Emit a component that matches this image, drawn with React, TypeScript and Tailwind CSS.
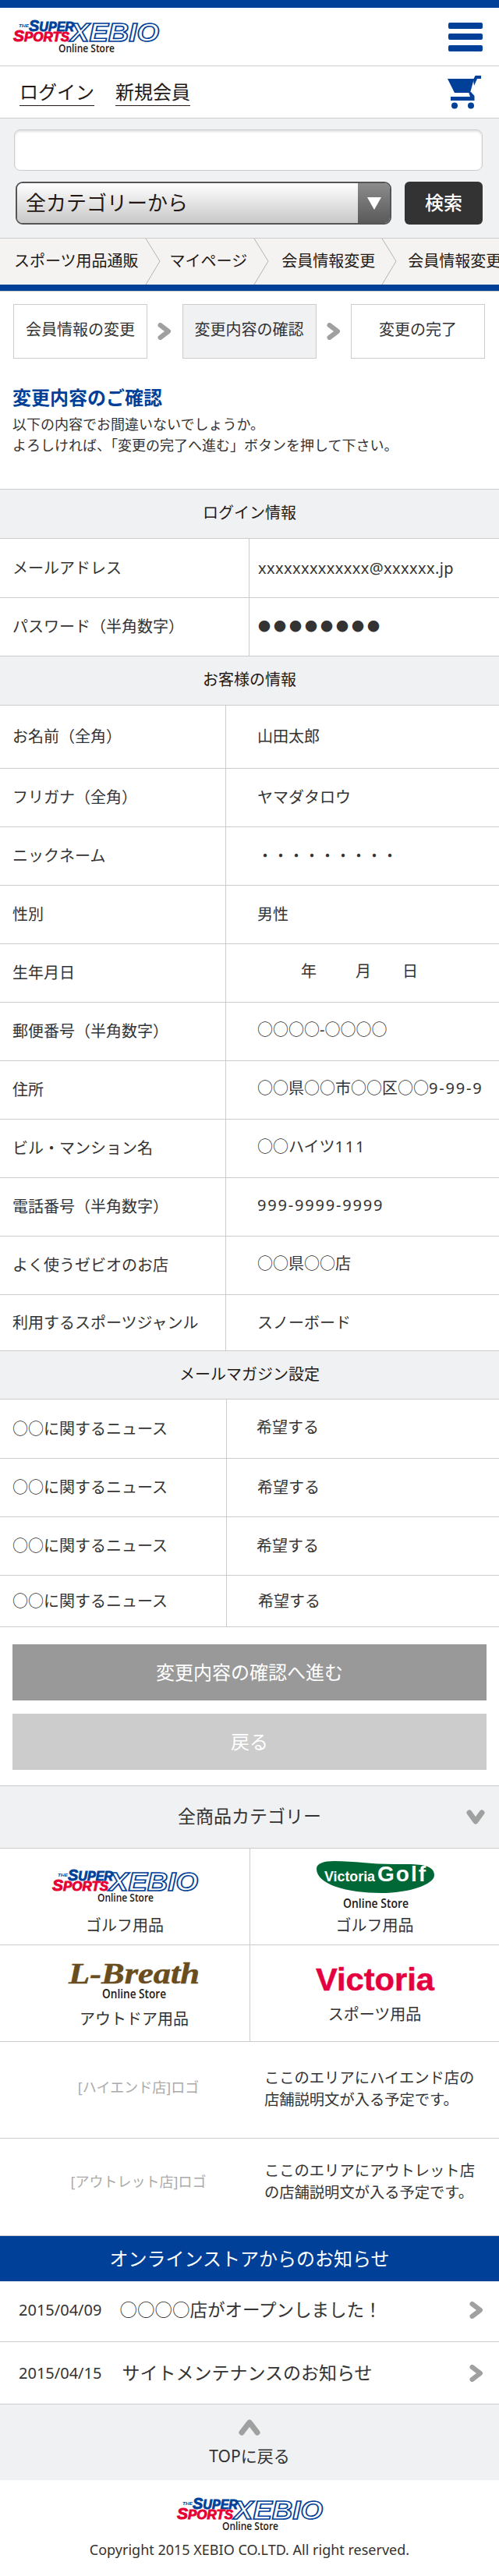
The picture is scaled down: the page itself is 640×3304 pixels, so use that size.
import React from "react";

const BLUE = "#004098";

function Logo() {
  return (
    <svg width="189" height="44" viewBox="0 0 189 44" role="img" aria-label="The Super Sports XEBIO Online Store" className="overflow-visible">
      <g fontFamily="'Liberation Sans', sans-serif" fontWeight="700" fontStyle="italic">
        <text x="8" y="10" fontSize="6" fill={BLUE} textLength="13" lengthAdjust="spacingAndGlyphs">THE</text>
        <text x="21" y="15" fill={BLUE} stroke={BLUE} strokeWidth="0.9" textLength="58" lengthAdjust="spacingAndGlyphs">
          <tspan fontSize="21">S</tspan>
          <tspan fontSize="17">UPER</tspan>
        </text>
        <text x="1" y="28" fill="#e60033" stroke="#e60033" strokeWidth="0.9" textLength="72" lengthAdjust="spacingAndGlyphs">
          <tspan fontSize="20">S</tspan>
          <tspan fontSize="16">PORTS</tspan>
        </text>
        <text x="74" y="28" fontSize="33" fill="#ffffff" stroke={BLUE} strokeWidth="1.6" textLength="114" lengthAdjust="spacingAndGlyphs">XEBIO</text>
      </g>
      <OnlineStore x={95} y={42} />
    </svg>
  );
}

function OnlineStore({ x, y, w = 72, size = 14 }: { x: number; y: number; w?: number; size?: number }) {
  return (
    <text x={x} y={y} textAnchor="middle" fontFamily="'Open Sans', sans-serif" fontWeight="600" fontSize={size} fill="#231815" textLength={w} lengthAdjust="spacingAndGlyphs">
      Online Store
    </text>
  );
}

function VictoriaGolf() {
  return (
    <svg width="152" height="62" viewBox="0 0 152 62" role="img" aria-label="Victoria Golf Online Store" className="overflow-visible">
      <path d="M1 10C1 3 10 0 24 0C50 0 70 4 100 4C125 4 152 2 152 18C152 30 120 41 84 41C40 41 1 30 1 10Z" fill="#006837" />
      <g fontFamily="'Liberation Sans', sans-serif" fontWeight="700" fill="#ffffff">
        <text x="11" y="26" fontSize="18" textLength="65" lengthAdjust="spacingAndGlyphs">Victoria</text>
        <text x="79" y="26" fontSize="28" textLength="62" lengthAdjust="spacing">Golf</text>
      </g>
      <OnlineStore x={77} y={60} w={84} size={16} />
    </svg>
  );
}

function LBreath() {
  return (
    <svg width="170" height="50" viewBox="0 0 170 50" role="img" aria-label="L-Breath Online Store" className="overflow-visible">
      <text x="1" y="29" fontFamily="'Liberation Serif', serif" fontWeight="700" fontStyle="italic" fontSize="37" fill="#6a4d1e" stroke="#6a4d1e" strokeWidth="0.5" textLength="168" lengthAdjust="spacingAndGlyphs">
        L-Breath
      </text>
      <OnlineStore x={85} y={48} w={82} size={16} />
    </svg>
  );
}

function Victoria() {
  return (
    <svg width="152" height="34" viewBox="0 0 152 34" role="img" aria-label="Victoria" className="overflow-visible">
      <text x="0" y="30" fontFamily="'Liberation Sans', sans-serif" fontWeight="700" fontSize="40" fill="#e4003f" stroke="#e4003f" strokeWidth="0.5" textLength="152" lengthAdjust="spacingAndGlyphs">
        Victoria
      </text>
    </svg>
  );
}

function Cart() {
  return (
    <svg width="44" height="43" viewBox="0 0 44 43" aria-hidden="true" fill={BLUE}>
      <path d="M1 4H35L30 22H10Z" />
      <path d="M34 5L36.5 0H44V4H39L35 13Z" />
      <path d="M28 21H31L35.5 26V32H5V27H30Z" />
      <circle cx="10" cy="38.5" r="4" />
      <circle cx="31" cy="38.5" r="4" />
    </svg>
  );
}

function ArrowRight() {
  return (
    <svg width="18" height="22" viewBox="0 0 18 22" aria-hidden="true" className="shrink-0">
      <path d="M3.5 3L14 11L3.5 19" fill="none" stroke="#a0a0a0" strokeWidth="6" strokeLinecap="round" strokeLinejoin="round" />
    </svg>
  );
}

function Crumb({ label, gap }: { label: string; gap: string }) {
  return (
    <div className={`flex h-full shrink-0 items-center ${gap}`}>
      <span className="-mt-[2px]">{label}</span>
      <svg width="20" height="59" viewBox="0 0 20 59" aria-hidden="true" className="ml-[8px] shrink-0">
        <path d="M1 0L19 29L1 59" fill="none" stroke="#b4b4b4" strokeWidth="1" />
      </svg>
    </div>
  );
}

function SectionHeader({ children, className = "h-[63px]" }: { children: React.ReactNode; className?: string }) {
  return (
    <div className={`flex items-center justify-center border-b border-[#ccc] bg-[#f0f1f3] pb-[2px] text-[20px] text-[#231815] ${className}`}>
      {children}
    </div>
  );
}

function Row({
  label,
  value,
  h = "h-[75px]",
  left = "w-[290px]",
  pl = "pl-[40px]",
  valueShift = "",
}: {
  label: string;
  value: React.ReactNode;
  h?: string;
  left?: string;
  pl?: string;
  valueShift?: string;
}) {
  return (
    <div className={`flex border-b border-[#ccc] text-[20px] text-[#333] ${h}`}>
      <div className={`flex shrink-0 items-center border-r border-[#ccc] pl-[16px] ${left}`}>
        <span>{label}</span>
      </div>
      <div className={`flex min-w-0 flex-1 items-center ${pl}`}>
        <span className={`whitespace-nowrap ${valueShift}`}>{value}</span>
      </div>
    </div>
  );
}

const UP = "-mt-[4px]";
const NEWS = "○○に関するニュース";

export default function App() {
  return (
    <div className="h-[3304px] w-[640px] overflow-hidden bg-white font-['Noto_Sans','Noto_Sans_CJK_JP',sans-serif] text-[#333]">
      <div className="h-[10px] bg-[#004098]" />

      <header className="flex h-[75px] items-center justify-between border-b border-[#ccc] pl-[16px] pr-[21px]">
        <Logo />
        <button aria-label="メニュー" className="flex h-[37px] w-[44px] flex-col justify-between">
          <span className="h-[8px] rounded-[2px] bg-[#004098]" />
          <span className="h-[8px] rounded-[2px] bg-[#004098]" />
          <span className="h-[8px] rounded-[2px] bg-[#004098]" />
        </button>
      </header>

      <div className="flex h-[67px] items-center justify-between border-b border-[#ccc] pl-[25px] pr-[23px]">
        <div className="flex gap-[27px] text-[24px] leading-[34px] text-[#231815]">
          <a className="border-b border-[#231815]">ログイン</a>
          <a className="border-b border-[#231815]">新規会員</a>
        </div>
        <Cart />
      </div>

      <div className="flex h-[154px] flex-col gap-[14px] border-b border-[#ccc] bg-[#f0f1f3] pl-[18px] pr-[21px] pt-[14px]">
        <input
          aria-label="検索キーワード"
          className="h-[53px] w-full rounded-[8px] border border-[#ccc] bg-white shadow-[inset_0_2px_3px_rgba(0,0,0,0.12)]"
        />
        <div className="flex h-[55px] items-stretch justify-between pl-[2px]">
          <div className="flex w-[482px] overflow-hidden rounded-[9px] border-2 border-[#555]">
            <div className="flex flex-1 items-center bg-linear-to-b from-white to-[#c8c8c8] pl-[11px] text-[26px] text-[#231815]">
              全カテゴリーから
            </div>
            <div className="flex w-[41px] items-center justify-center bg-linear-to-b from-[#8c8c8c] to-[#5a5a5a]">
              <svg width="18" height="16" viewBox="0 0 18 16" aria-hidden="true">
                <path d="M0 0H18L9 16Z" fill="#fff" />
              </svg>
            </div>
          </div>
          <button className="flex w-[100px] items-center justify-center rounded-[6px] bg-[#333] pb-[2px] text-[24px] font-medium text-white">
            検索
          </button>
        </div>
      </div>

      <nav className="flex h-[59px] items-center overflow-hidden whitespace-nowrap bg-[#f4f3f1] pl-[18px] text-[20px] text-[#231815]">
        <Crumb label="スポーツ用品通販" gap="mr-[12px]" />
        <Crumb label="マイページ" gap="mr-[16px]" />
        <Crumb label="会員情報変更" gap="mr-[14px]" />
        <Crumb label="会員情報変更" gap="" />
      </nav>
      <div className="h-[9px] border-b border-[#ccc] bg-[#004098]" />

      <div className="mt-[16px] flex items-center justify-between pl-[17px] pr-[18px] text-[20px]">
        <div className="flex h-[70px] w-[172px] items-center justify-center border border-[#ccc] pb-[4px]">会員情報の変更</div>
        <ArrowRight />
        <div className="flex h-[70px] w-[172px] items-center justify-center border border-[#ccc] bg-[#f0f1f3] pb-[4px]">変更内容の確認</div>
        <ArrowRight />
        <div className="flex h-[70px] w-[172px] items-center justify-center border border-[#ccc] pb-[4px]">変更の完了</div>
      </div>

      <section className="px-[16px]">
        <h1 className="mt-[38px] text-[24px] font-bold leading-[24px] text-[#004098]">変更内容のご確認</h1>
        <p className="mt-[9px] text-[18px] leading-[27px] text-[#333]">
          以下の内容でお間違いないでしょうか。
          <br />
          よろしければ、「変更の完了へ進む」ボタンを押して下さい。
        </p>
      </section>

      <div className="mt-[42px] border-t border-[#ccc]">
        <SectionHeader>ログイン情報</SectionHeader>
        <Row
          label="メールアドレス"
          value={<span className="tracking-[0.4px]">xxxxxxxxxxxxx@xxxxxx.jp</span>}
          h="h-[76px]"
          left="w-[320px]"
          pl="pl-[11px]"
        />
        <Row
          label="パスワード（半角数字）"
          value={<span className="text-[16px] tracking-[4px]">●●●●●●●●</span>}
          left="w-[320px]"
          pl="pl-[11px]"
          valueShift={UP}
        />
        <SectionHeader>お客様の情報</SectionHeader>
        <Row label="お名前（全角）" value="山田太郎" h="h-[81px]" />
        <Row label="フリガナ（全角）" value="ヤマダタロウ" />
        <Row label="ニックネーム" value="・・・・・・・・・" />
        <Row label="性別" value="男性" />
        <Row
          label="生年月日"
          value={
            <span className="flex">
              <span className="ml-[56px]">年</span>
              <span className="ml-[50px]">月</span>
              <span className="ml-[40px]">日</span>
            </span>
          }
          valueShift={UP}
        />
        <Row label="郵便番号（半角数字）" value="○○○○-○○○○" valueShift={UP} />
        <Row
          label="住所"
          value={
            <>
              ○○県○○市○○区○○<span className="tracking-[1.8px]">9-99-9</span>
            </>
          }
          valueShift={UP}
        />
        <Row
          label="ビル・マンション名"
          value={
            <>
              ○○ハイツ<span className="tracking-[1.8px]">111</span>
            </>
          }
          valueShift={UP}
        />
        <Row label="電話番号（半角数字）" value={<span className="tracking-[1.8px]">999-9999-9999</span>} valueShift={UP} />
        <Row label="よく使うゼビオのお店" value="○○県○○店" valueShift={UP} />
        <Row label="利用するスポーツジャンル" value="スノーボード" h="h-[72px]" />
        <SectionHeader className="h-[62px]">メールマガジン設定</SectionHeader>
        <Row label={NEWS} value="希望する" h="h-[76px]" left="w-[291px]" pl="pl-[38px]" valueShift={UP} />
        <Row label={NEWS} value="希望する" left="w-[291px]" pl="pl-[39px]" />
        <Row label={NEWS} value="希望する" left="w-[291px]" pl="pl-[38px]" />
        <Row label={NEWS} value="希望する" h="h-[66px]" left="w-[291px]" pl="pl-[40px]" />
      </div>

      <div className="mt-[22px] flex flex-col gap-[17px] px-[16px] text-[24px] text-white">
        <button className="flex h-[72px] items-center justify-center bg-[#999]">変更内容の確認へ進む</button>
        <button className="flex h-[72px] items-center justify-center bg-[#ccc]">戻る</button>
      </div>

      <div className="relative mt-[20px] flex h-[81px] items-center justify-center border-y border-[#ccc] bg-[#f0f1f3] pb-[2px] text-[23px] text-[#333]">
        全商品カテゴリー
        <svg width="24" height="20" viewBox="0 0 24 20" aria-hidden="true" className="absolute right-[18px] top-[30px]">
          <path d="M4 4L12 15L20 4" fill="none" stroke="#a0a0a0" strokeWidth="7" strokeLinecap="round" strokeLinejoin="round" />
        </svg>
      </div>

      <div className="grid grid-cols-[321px_319px] text-[20px] text-[#333]">
        <div className="flex h-[124px] flex-col items-center gap-[17px] border-b border-r border-[#ccc] pt-[26px]">
          <Logo />
          <span className="leading-[24px]">ゴルフ用品</span>
        </div>
        <div className="flex h-[124px] flex-col items-center gap-[9px] border-b border-[#ccc] pt-[16px]">
          <VictoriaGolf />
          <span className="leading-[24px]">ゴルフ用品</span>
        </div>
        <div className="flex h-[124px] flex-col items-center gap-[13px] border-b border-r border-[#ccc] pl-[24px] pt-[20px]">
          <LBreath />
          <span className="leading-[24px]">アウトドア用品</span>
        </div>
        <div className="flex h-[124px] flex-col items-center gap-[15px] border-b border-[#ccc] pt-[28px]">
          <Victoria />
          <span className="leading-[24px]">スポーツ用品</span>
        </div>
      </div>

      <div className="flex h-[124px] border-b border-[#ccc]">
        <div className="flex w-[339px] shrink-0 items-center justify-center pb-[6px] pl-[16px] text-[18px] text-[#aaa]">[ハイエンド店]ロゴ</div>
        <p className="pt-[32px] text-[19.3px] leading-[28px] text-[#333]">
          ここのエリアにハイエンド店の
          <br />
          店舗説明文が入る予定です。
        </p>
      </div>
      <div className="flex h-[125px] border-b border-[#ccc]">
        <div className="flex w-[339px] shrink-0 items-center justify-center pb-[14px] pl-[16px] text-[18px] text-[#aaa]">[アウトレット店]ロゴ</div>
        <p className="pt-[27px] text-[19.3px] leading-[28px] text-[#333]">
          ここのエリアにアウトレット店
          <br />
          の店舗説明文が入る予定です。
        </p>
      </div>

      <h2 className="flex h-[58px] items-center justify-center bg-[#004098] text-[24px] font-normal text-white">
        オンラインストアからのお知らせ
      </h2>

      <div className="flex h-[78px] items-center justify-between border-b border-[#ccc] pb-[4px] pl-[24px] pr-[20px] text-[22.5px] text-[#333]">
        <span className="flex items-center whitespace-nowrap">
          <span className="mr-[23px] text-[20px]">2015/04/09</span>○○○○店がオープンしました！
        </span>
        <ArrowRight />
      </div>
      <div className="flex h-[80px] items-center justify-between border-b border-[#ccc] pl-[24px] pr-[20px] text-[23px] text-[#333]">
        <span className="flex items-center whitespace-nowrap">
          <span className="mr-[26px] text-[20px]">2015/04/15</span>サイトメンテナンスのお知らせ
        </span>
        <ArrowRight />
      </div>

      <div className="flex h-[97px] flex-col items-center bg-[#f0f1f3] pt-[18px] text-[21px] text-[#333]">
        <svg width="28" height="22" viewBox="0 0 28 22" aria-hidden="true">
          <path d="M4 18L14 5L24 18" fill="none" stroke="#a0a0a0" strokeWidth="7" strokeLinecap="round" strokeLinejoin="round" />
        </svg>
        <span className="mt-[14px] leading-[24px]">TOPに戻る</span>
      </div>

      <footer className="flex h-[123px] flex-col items-center pt-[22px]">
        <Logo />
        <p className="mt-[11px] text-[18px] leading-[24px] text-[#333]">Copyright 2015 XEBIO CO.LTD. All right reserved.</p>
      </footer>
    </div>
  );
}
